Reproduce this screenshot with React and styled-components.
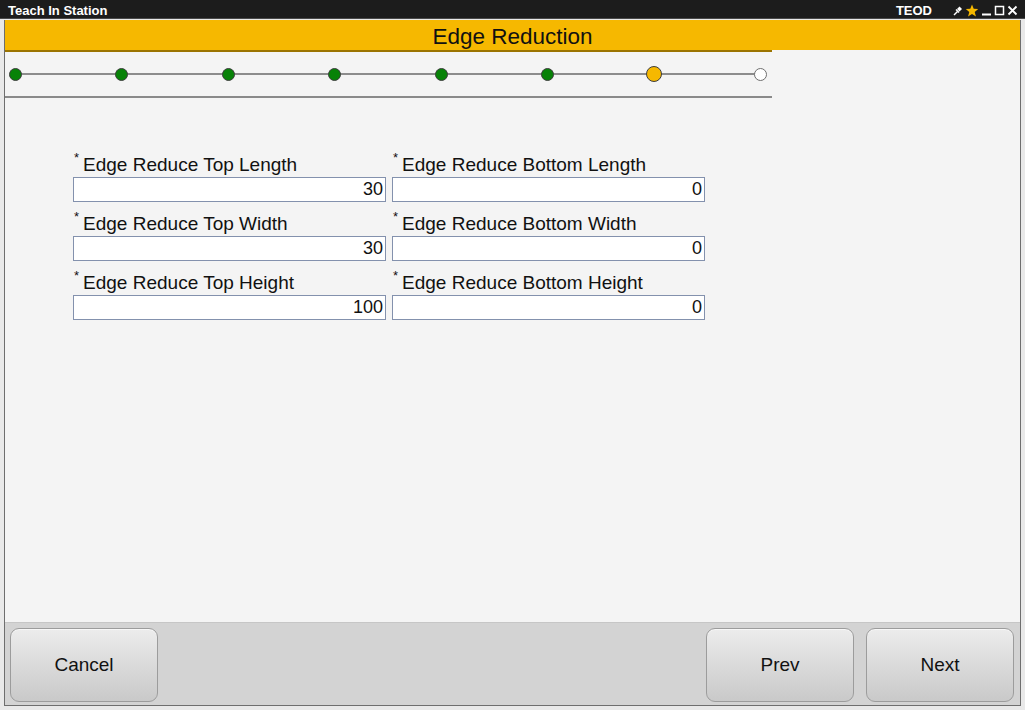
import React from "react";
import styled, { createGlobalStyle } from "styled-components";

const Global = createGlobalStyle`
  html, body { margin: 0; padding: 0; background: #e9e9e9; }
  * { box-sizing: border-box; }
  body { font-family: "Liberation Sans", Arial, sans-serif; }
`;

const Screen = styled.div`
  width: 1025px;
  height: 710px;
  display: flex;
  flex-direction: column;
  background: #e9e9e9;
  overflow: hidden;
`;

const TitleBar = styled.div`
  height: 19px;
  flex: none;
  background: #1c1c1c;
  border-bottom: 1px solid #4a4a4a;
  display: flex;
  align-items: center;
  padding: 3px 7px 0 8px;
  color: #fff;
  font-weight: bold;
  font-size: 13px;
`;

const AppName = styled.span`
  flex: 1;
`;

const StationCode = styled.span`
  margin-right: 21px;
`;

const TitleIcons = styled.div`
  display: flex;
  align-items: center;
  gap: 2px;
`;

const Window = styled.div`
  flex: 1;
  margin: 1px 4px 4px 4px;
  border: 1px solid #6e6e6e;
  border-top: none;
  display: flex;
  flex-direction: column;
  background: #f4f4f4;
  min-height: 0;
`;

const Header = styled.div`
  height: 30px;
  flex: none;
  background: #f6b800;
  display: flex;
  align-items: center;
  justify-content: center;
  padding-top: 4px;
  font-size: 22.5px;
  color: #111;
`;

const StepperWrap = styled.div`
  width: 767px;
  height: 48px;
  flex: none;
  border-top: 2px solid #9b7400;
  border-bottom: 2px solid #8a8a8a;
  position: relative;
  display: flex;
  align-items: center;
  justify-content: space-between;
  padding: 0 5px 0 4px;
`;

const StepLine = styled.div`
  position: absolute;
  left: 11px;
  right: 11px;
  top: 21px;
  height: 2px;
  background: #8c8c8c;
`;

const Dot = styled.div`
  position: relative;
  z-index: 1;
  width: ${(p) => (p.$state === "current" ? 16 : 13)}px;
  height: ${(p) => (p.$state === "current" ? 16 : 13)}px;
  margin: ${(p) => (p.$state === "current" ? "0 -1.5px" : "0")};
  border-radius: 50%;
  border: 1px solid ${(p) => (p.$state === "todo" ? "#6f6f6f" : "#3e3e3e")};
  background: ${(p) =>
    p.$state === "done" ? "#078207" : p.$state === "current" ? "#f6b800" : "#ffffff"};
`;

const Content = styled.div`
  flex: 1;
  padding: 53px 0 0 68px;
`;

const FormGrid = styled.div`
  display: grid;
  grid-template-columns: 313px 313px;
  column-gap: 6px;
  row-gap: 8px;
`;

const Field = styled.div`
  display: flex;
  flex-direction: column;
`;

const Label = styled.label`
  font-size: 19px;
  color: #111;
  height: 26px;
  line-height: 27px;
  display: flex;
  align-items: flex-start;
  padding-left: 1px;
`;

const Star = styled.span`
  font-size: 13px;
  line-height: 13px;
  margin-right: 4px;
`;

const Input = styled.div`
  height: 25px;
  background: #fff;
  border: 1px solid #8391ad;
  font-size: 18px;
  text-align: right;
  line-height: 23px;
  padding-right: 2px;
  color: #111;
`;

const Footer = styled.div`
  height: 83px;
  flex: none;
  background: #d3d3d3;
  border-top: 1px solid #c6c6c6;
  display: flex;
  align-items: flex-start;
  padding: 5px 6px 0 5px;
  gap: 12px;
`;

const Spacer = styled.div`
  flex: 1;
`;

const Button = styled.button`
  width: 148px;
  height: 74px;
  border-radius: 9px;
  border: 1px solid #9c9c9c;
  background: linear-gradient(#ececec, #c9c9c9);
  box-shadow: inset 0 1px 0 #f7f7f7;
  font-family: "Liberation Sans", Arial, sans-serif;
  font-size: 19px;
  color: #111;
`;

const fields = [
  ["Edge Reduce Top Length", "30"],
  ["Edge Reduce Bottom Length", "0"],
  ["Edge Reduce Top Width", "30"],
  ["Edge Reduce Bottom Width", "0"],
  ["Edge Reduce Top Height", "100"],
  ["Edge Reduce Bottom Height", "0"],
];

const steps = ["done", "done", "done", "done", "done", "done", "current", "todo"];

export default function App() {
  return (
    <>
      <Global />
      <Screen>
        <TitleBar>
          <AppName>Teach In Station</AppName>
          <StationCode>TEOD</StationCode>
          <TitleIcons>
            <svg width="10" height="11" viewBox="0 0 10 11">
              <path d="M1 10 L4.5 6.5" stroke="#fff" strokeWidth="1.4" />
              <path d="M4 4 L6.5 1.5 L9 4 L6.5 6.5 Z" fill="#fff" />
              <path d="M3 4.5 L6 7.5" stroke="#fff" strokeWidth="1.4" />
            </svg>
            <svg width="14" height="13" viewBox="0 0 24 23">
              <path
                d="M12 1 L15 8.6 L23 9 L16.8 14.2 L19 22 L12 17.5 L5 22 L7.2 14.2 L1 9 L9 8.6 Z"
                fill="#f6b800"
              />
            </svg>
            <svg width="11" height="11" viewBox="0 0 11 11">
              <rect x="1" y="8.5" width="9" height="2" fill="#fff" />
            </svg>
            <svg width="11" height="11" viewBox="0 0 11 11">
              <rect x="1.5" y="1.5" width="8" height="8" fill="none" stroke="#fff" strokeWidth="1.5" />
            </svg>
            <svg width="11" height="11" viewBox="0 0 11 11">
              <path d="M1.5 1.5 L9.5 9.5 M9.5 1.5 L1.5 9.5" stroke="#fff" strokeWidth="1.8" />
            </svg>
          </TitleIcons>
        </TitleBar>
        <Window>
          <Header>Edge Reduction</Header>
          <StepperWrap>
            <StepLine />
            {steps.map((s, i) => (
              <Dot key={i} $state={s} />
            ))}
          </StepperWrap>
          <Content>
            <FormGrid>
              {fields.map(([label, value]) => (
                <Field key={label}>
                  <Label>
                    <Star>*</Star>
                    {label}
                  </Label>
                  <Input>{value}</Input>
                </Field>
              ))}
            </FormGrid>
          </Content>
          <Footer>
            <Button>Cancel</Button>
            <Spacer />
            <Button>Prev</Button>
            <Button>Next</Button>
          </Footer>
        </Window>
      </Screen>
    </>
  );
}
